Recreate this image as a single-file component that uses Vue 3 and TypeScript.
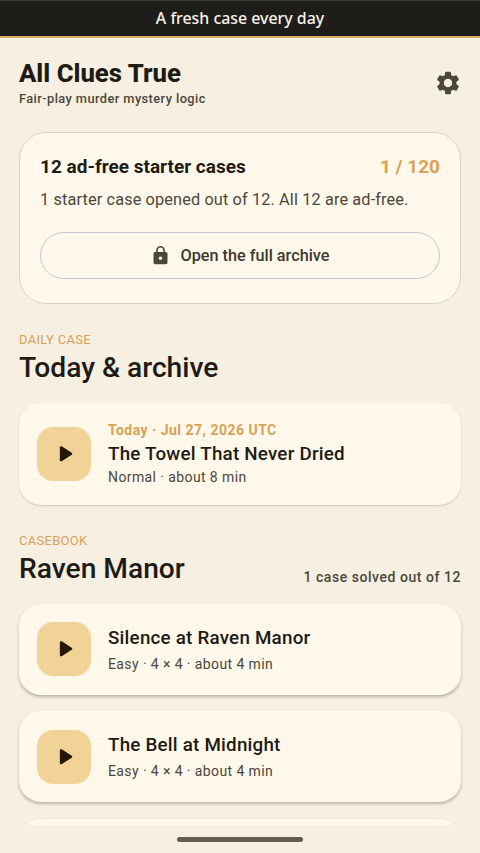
<script setup lang="ts">
interface CaseItem {
  title: string
  meta: string
}

const cases: CaseItem[] = [
  { title: 'Silence at Raven Manor', meta: 'Easy · 4 × 4 · about 4 min' },
  { title: 'The Bell at Midnight', meta: 'Easy · 4 × 4 · about 4 min' },
]
</script>

<template>
  <div class="screen">
    <div class="banner">A fresh case every day</div>
    <main class="content">
      <header class="top">
        <div>
          <h1>All Clues True</h1>
          <p class="tagline">Fair-play murder mystery logic</p>
        </div>
        <svg class="gear" viewBox="0 0 24 24" aria-hidden="true">
          <path d="M19.14 12.94c.04-.3.06-.61.06-.94 0-.32-.02-.64-.07-.94l2.03-1.58c.18-.14.23-.41.12-.61l-1.92-3.32c-.12-.22-.37-.29-.59-.22l-2.39.96c-.5-.38-1.03-.7-1.62-.94l-.36-2.54c-.04-.24-.24-.41-.48-.41h-3.84c-.24 0-.43.17-.47.41l-.36 2.54c-.59.24-1.13.57-1.62.94l-2.39-.96c-.22-.08-.47 0-.59.22L2.74 8.87c-.12.21-.08.47.12.61l2.03 1.58c-.05.3-.09.63-.09.94s.02.64.07.94l-2.03 1.58c-.18.14-.23.41-.12.61l1.92 3.32c.12.22.37.29.59.22l2.39-.96c.5.38 1.03.7 1.62.94l.36 2.54c.05.24.24.41.48.41h3.84c.24 0 .44-.17.47-.41l.36-2.54c.59-.24 1.13-.56 1.62-.94l2.39.96c.22.08.47 0 .59-.22l1.92-3.32c.12-.22.07-.47-.12-.61l-2.01-1.58zM12 15.6c-1.98 0-3.6-1.62-3.6-3.6s1.62-3.6 3.6-3.6 3.6 1.62 3.6 3.6-1.62 3.6-3.6 3.6z" />
        </svg>
      </header>

      <section class="starter">
        <div class="starter-head">
          <h2>12 ad-free starter cases</h2>
          <span class="count">1 / 120</span>
        </div>
        <p class="starter-text">1 starter case opened out of 12. All 12 are ad-free.</p>
        <button class="archive" type="button">
          <svg class="lock" viewBox="0 0 24 24" aria-hidden="true">
            <path d="M18 8h-1V6c0-2.76-2.24-5-5-5S7 3.240 7 6v2H6c-1.100 0-2 .9-2 2v10c0 1.100.9 2 2 2h12c1.100 0 2-.9 2-2V10c0-1.100-.9-2-2-2zm-6 9c-1.100 0-2-.9-2-2s.9-2 2-2 2 .9 2 2-.9 2-2 2zm3.100-9H8.900V6c0-1.710 1.390-3.100 3.100-3.100s3.100 1.390 3.100 3.100v2z" />
          </svg>
          <span>Open the full archive</span>
        </button>
      </section>

      <div class="section-head daily-head">
        <div>
          <p class="eyebrow">DAILY CASE</p>
          <h2 class="section-title">Today &amp; archive</h2>
        </div>
      </div>
      <article class="card daily">
        <span class="play">
          <svg viewBox="0 0 24 24" aria-hidden="true"><path d="M8 6.820v10.360c0 .79.870 1.270 1.540.84l8.140-5.180c.62-.39.62-1.290 0-1.690L9.540 5.980C8.870 5.550 8 6.030 8 6.820z" /></svg>
        </span>
        <div>
          <p class="date">Today · Jul 27, 2026 UTC</p>
          <h3>The Towel That Never Dried</h3>
          <p class="meta">Normal · about 8 min</p>
        </div>
      </article>

      <div class="section-head book-head">
        <div>
          <p class="eyebrow">CASEBOOK</p>
          <h2 class="section-title">Raven Manor</h2>
        </div>
        <span class="solved">1 case solved out of 12</span>
      </div>
      <div class="list">
        <article v-for="item in cases" :key="item.title" class="card entry">
          <span class="play">
            <svg viewBox="0 0 24 24" aria-hidden="true"><path d="M8 6.820v10.360c0 .79.870 1.270 1.540.84l8.140-5.180c.62-.39.62-1.290 0-1.690L9.540 5.980C8.870 5.550 8 6.030 8 6.820z" /></svg>
          </span>
          <div>
            <h3>{{ item.title }}</h3>
            <p class="meta">{{ item.meta }}</p>
          </div>
        </article>
        <article class="card entry"></article>
      </div>
    </main>
    <footer class="nav"><span class="handle"></span></footer>
  </div>
</template>

<style>
body {
  background: #f6efe2;
}
</style>

<style scoped>
.screen {
  box-sizing: border-box;
  width: 480px;
  height: 853px;
  display: flex;
  flex-direction: column;
  overflow: hidden;
  background: #f6efe2;
  color: #1d1b14;
  font-family: Roboto, "Liberation Sans", sans-serif;
}
h1, h2, h3, p {
  margin: 0;
  white-space: nowrap;
}
.banner {
  box-sizing: border-box;
  flex: none;
  height: 38px;
  border-top: 1px solid #3a3933;
  border-bottom: 2px solid #d9ae64;
  background: #1f1d19;
  color: #f8f4ea;
  font: 500 15.900px/34px "Noto Sans", "Open Sans", sans-serif;
  text-align: center;
}
.content {
  flex: 1;
  min-height: 0;
  overflow: hidden;
  padding: 20px 19px 0;
}
.top {
  display: flex;
  justify-content: space-between;
  height: 74px;
}
h1 {
  font-size: 25.700px;
  font-weight: 800;
  line-height: 31px;
}
.tagline {
  font-size: 12.800px;
  font-weight: 500;
  line-height: 20px;
  letter-spacing: 0.430px;
  color: #4b473a;
}
.gear {
  width: 28px;
  height: 28px;
  margin: 11px -0.500px 0 0;
  fill: #4b473a;
}
.starter {
  box-sizing: border-box;
  height: 172px;
  padding: 20px;
  border: 1.500px solid #dbd2c5;
  border-radius: 27px;
  background: #fff8eb;
}
.starter-head {
  display: flex;
  justify-content: space-between;
  line-height: 28px;
}
.starter-head h2 {
  font-size: 19px;
  font-weight: 700;
}
.count {
  font-weight: 700;
  font-size: 19px;
  color: #d8a254;
}
.starter-text {
  margin-top: 6px;
  font-size: 16.300px;
  line-height: 26px;
  letter-spacing: 0.130px;
  color: #4b473a;
}
.archive {
  box-sizing: border-box;
  display: flex;
  align-items: center;
  justify-content: center;
  gap: 9px;
  width: 100%;
  height: 47px;
  margin-top: 19px;
  padding: 0;
  border: 1.300px solid #c9c2d0;
  border-radius: 24px;
  background: none;
  color: #3d392d;
  font: 500 16.250px/24px Roboto, sans-serif;
}
.lock {
  width: 21px;
  height: 21px;
  fill: #4b473a;
}
.section-head {
  display: flex;
  justify-content: space-between;
  align-items: flex-start;
}
.daily-head {
  margin-top: 27px;
  height: 72px;
}
.book-head {
  margin-top: 27px;
  height: 71.500px;
}
.eyebrow {
  font-size: 12.900px;
  line-height: 18px;
  letter-spacing: 0.350px;
  color: #d8a254;
}
.section-title {
  font-size: 28.200px;
  font-weight: 500;
  line-height: 37px;
}
.solved {
  margin-top: 35px;
  font-size: 14px;
  font-weight: 500;
  line-height: 20px;
  letter-spacing: 0.540px;
  color: #4b473a;
}
.card {
  box-sizing: border-box;
  display: flex;
  align-items: center;
  gap: 17px;
  padding: 0 18px;
  border-radius: 22px;
  background: #fff8eb;
  box-shadow: 0 1px 1.500px rgba(80, 60, 30, 0.220);
}
.daily {
  height: 102px;
  padding-bottom: 1px;
}
.entry {
  height: 91px;
  box-shadow: 0 2px 3px -0.500px rgba(80, 60, 30, 0.320);
}
.list {
  display: flex;
  flex-direction: column;
  gap: 16.700px;
}
.play {
  flex: none;
  display: flex;
  align-items: center;
  justify-content: center;
  width: 54px;
  height: 54px;
  border-radius: 16px;
  background: #f1d398;
}
.play svg {
  width: 29.500px;
  height: 29.500px;
  margin-left: 1px;
  fill: #251800;
}
.date {
  font-size: 14px;
  font-weight: 700;
  line-height: 21px;
  letter-spacing: 0.480px;
  color: #d8a254;
}
h3 {
  font-size: 18.800px;
  font-weight: 500;
  line-height: 26px;
  letter-spacing: 0.220px;
}
.meta {
  font-size: 14px;
  line-height: 20px;
  letter-spacing: 0.400px;
  color: #4b473a;
}
.entry .meta {
  margin-top: 3px;
}
.nav {
  flex: none;
  display: flex;
  justify-content: center;
  height: 28px;
}
.handle {
  width: 126px;
  height: 4.500px;
  margin-top: 12px;
  border-radius: 3px;
  background: #625c50;
}
</style>
